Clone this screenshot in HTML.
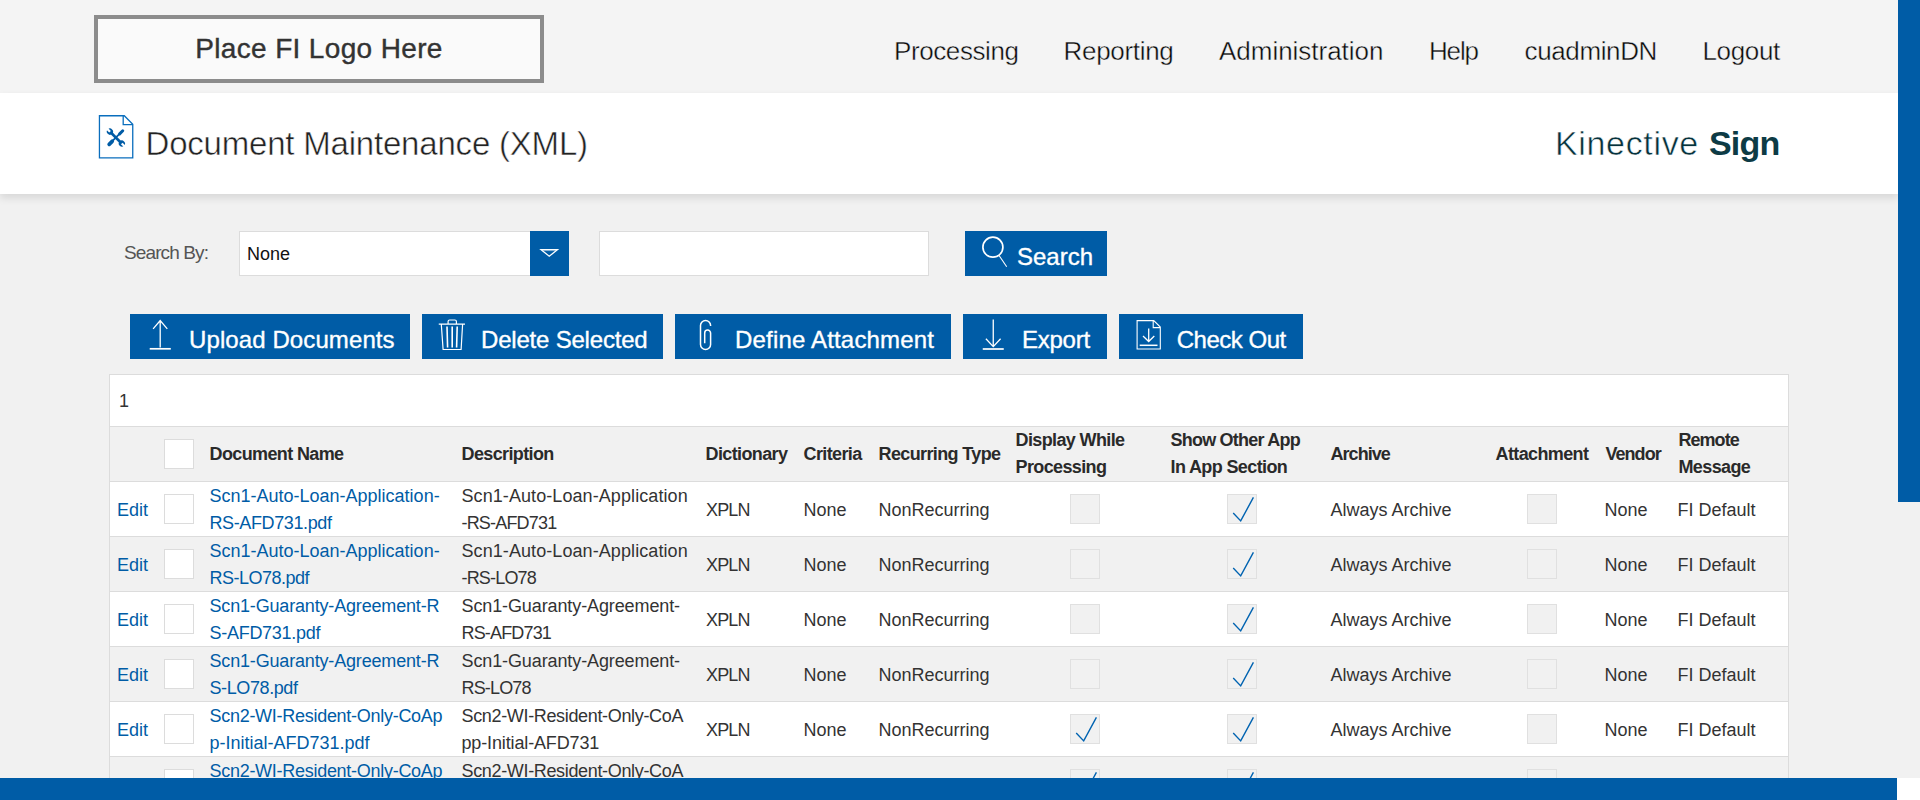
<!DOCTYPE html>
<html lang="en">
<head>
<meta charset="utf-8">
<title>Document Maintenance (XML)</title>
<style>
*{box-sizing:border-box;margin:0;padding:0}
html,body{width:1920px;height:800px;overflow:hidden;background:#f1f1f1}
body{font-family:"Liberation Sans",sans-serif;color:#333;position:relative}
#app{position:absolute;left:0;top:0;width:1898px;height:778px;overflow:hidden;background:#f1f1f1}
/* scrollbars */
#vthumb{position:absolute;left:1898px;top:0;width:22px;height:502px;background:#005ca6}
#hthumb{position:absolute;left:0;top:778px;width:1897px;height:22px;background:#005ca6}
#corner{position:absolute;left:1897px;top:778px;width:23px;height:22px;background:#fff}
/* header */
#top{position:absolute;left:0;top:0;width:1898px;height:93px;background:#f4f4f4}
#logo{position:absolute;left:94px;top:15px;width:450px;height:68px;border:4px solid #8c8c8c;background:#fafafa;text-align:center;font-size:28px;letter-spacing:.35px;line-height:59px;color:#333;-webkit-text-stroke:.4px #333;white-space:nowrap}
#nav{position:absolute;left:0;top:0;list-style:none}
#nav li{position:absolute;top:35px;font-size:26px;line-height:32px;color:#0a0a0a;-webkit-text-stroke:.4px #f4f4f4;white-space:nowrap}
/* title bar */
#bar{position:absolute;left:0;top:93px;width:1898px;height:101px;background:#fff;box-shadow:0 4px 8px rgba(0,0,0,.11)}
#bar h1{position:absolute;left:145.5px;top:31px;letter-spacing:-.2px;font-size:33px;line-height:40px;font-weight:normal;color:#222;-webkit-text-stroke:.5px #fff;white-space:nowrap}
#brand{position:absolute;left:1555px;top:30px;font-size:34px;line-height:40px;color:#0d3b45;white-space:nowrap}
#brand b{font-weight:bold;position:absolute;left:154px;top:0;letter-spacing:-.83px}
#docicon{position:absolute;left:97px;top:21px}
/* search row */
#lbl{position:absolute;left:124px;top:241px;font-size:19px;letter-spacing:-.88px;line-height:24px;color:#555;white-space:nowrap}
#sel{position:absolute;left:239px;top:231px;width:330px;height:45px;background:#fff;border:1px solid #dcdcdc;font-size:18px;line-height:44px;padding-left:7px;color:#111}
#sel i{position:absolute;right:-1px;top:-1px;width:39px;height:45px;background:#005ca6}
#txt{position:absolute;left:599px;top:231px;width:330px;height:45px;background:#fff;border:1px solid #dcdcdc}
.btn{position:absolute;height:45px;background:#005ca6;color:#fff;font-size:24px;line-height:30px;white-space:nowrap}
.btn span{position:absolute;top:11px;-webkit-text-stroke:.35px #fff}
.btn svg{position:absolute;left:0;top:0}
/* grid */
#grid{position:absolute;left:109px;top:374px;width:1679px;border-collapse:collapse;table-layout:fixed;font-size:18px;line-height:27px;color:#333;background:#fff}
#grid td,#grid th{border-top:1px solid #dcdcdc;border-bottom:1px solid #dcdcdc;padding:0 0 0 8px;text-align:left;vertical-align:middle;white-space:nowrap;overflow:visible}
#grid{border:1px solid #dcdcdc}
#grid tr.pg td{height:52px;background:#fff;padding:2px 0 0 9px}
#grid tr.hd th{height:55px;background:#f1f1f1;font-weight:bold;color:#2a2a2a;letter-spacing:-.62px}
#grid tr.r{background:#fff}
#grid tr.r td{height:55px;line-height:26.5px;padding-top:1px}
#grid tr.alt{background:#f1f1f1}
#grid tr.r td.t{padding-top:3px}
#grid tr.r .cb,#grid tr.r .ro{margin-top:-1px}
#grid a{color:#005ca6;text-decoration:none}
.cb{position:relative;display:block;width:30px;height:30px;background:#fff;border:1px solid #dcdcdc}
.ro{display:block;width:30px;height:30px;background:#f1f1f1;border:1px solid #e0e0e0;margin:0 auto;position:relative}
.ro svg{position:absolute;left:0;top:0}
#grid td.c{text-align:center;padding-right:8px}
#grid td:nth-child(9),#grid td:nth-child(11){padding-right:10px}
#grid td:nth-child(12),#grid td:nth-child(13){padding-left:7px}
#grid td:first-child{padding-left:7px}
#grid td:nth-child(2),#grid th:nth-child(2){padding-left:6px}
</style>
</head>
<body>
<div id="app">
  <div id="top">
    <div id="logo">Place FI Logo Here</div>
    <ul id="nav">
      <li style="left:894px;letter-spacing:-.4px">Processing</li>
      <li style="left:1063.5px;letter-spacing:-.3px">Reporting</li>
      <li style="left:1219px;letter-spacing:-.02px">Administration</li>
      <li style="left:1429px;letter-spacing:-1.17px">Help</li>
      <li style="left:1524.5px;letter-spacing:-.37px">cuadminDN</li>
      <li style="left:1702.5px;letter-spacing:-.35px">Logout</li>
    </ul>
  </div>
  <div id="bar">
    <svg id="docicon" width="38" height="46" viewBox="0 0 38 46">
      <path d="M2.45 1.75H27.3L35.75 10.2V43.95H2.45Z M26.2 1.75V10.6H35.75" fill="none" stroke="#0a6ebd" stroke-width="1.3"/>
      <g transform="translate(18.9 23.6) scale(.88) rotate(45)" fill="#005ca6" stroke="none">
        <rect x="-9" y="-1.5" width="18" height="3"/>
        <circle cx="-9.6" cy="0" r="3.5"/><circle cx="9.6" cy="0" r="3.5"/>
        <rect x="-14" y="-1.3" width="4.6" height="2.6" fill="#fff"/><rect x="9.4" y="-1.3" width="4.6" height="2.6" fill="#fff"/>
      </g>
      <g transform="translate(18.9 23.6) scale(.88) rotate(-45)" fill="none" stroke="#005ca6" stroke-linecap="round">
        <path d="M-5 0H5" stroke-width="2"/>
        <path d="M-10.8 0H-6" stroke-width="4.2"/>
        <path d="M6 0H11" stroke-width="3.4"/>
      </g>
    </svg>
    <h1>Document Maintenance (XML)</h1>
    <div id="brand"><span style="letter-spacing:.66px;color:#06323c;-webkit-text-stroke:.55px #fff">Kinective</span> <b>Sign</b></div>
  </div>
  <div id="lbl">Search By:</div>
  <div id="sel">None<i><svg width="39" height="44" viewBox="0 0 39 44"><path d="M10.9 18.5H27.6L19.25 25.3Z" fill="none" stroke="#fff" stroke-width="1.2"/><path d="M12.5 19.6H26" fill="none" stroke="#fff" stroke-opacity=".6" stroke-width="1"/></svg></i></div>
  <div id="txt"></div>
  <div class="btn" id="b0" style="left:965px;top:231px;width:142px"><svg width="142" height="45"><circle cx="27.9" cy="16.2" r="10" fill="none" stroke="#fff" stroke-width="1.7"/><path d="M33.9 24.2L41.7 35.7" fill="none" stroke="#fff" stroke-width="1.1"/></svg><span style="left:52px">Search</span></div>
  <div class="btn" id="b1" style="left:130px;top:314px;width:280px"><svg width="280" height="45"><path d="M30.2 6.6V33.4M23.1 14.9L30.2 6.6L37.3 14.9" fill="none" stroke="#fff" stroke-width="1.3"/><path d="M19.7 34.8H40.8" fill="none" stroke="#fff" stroke-width="1.7"/></svg><span style="left:59px;letter-spacing:.1px">Upload Documents</span></div>
  <div class="btn" id="b2" style="left:422px;top:314px;width:241px"><svg width="241" height="45"><path d="M16.75 10.2H43M26.1 10.2V7.5Q26.1 6 27.6 6H32.9Q34.4 6 34.4 7.5V10.2M19.3 10.2L21.1 35.5H39.1L40.6 10.2" fill="none" stroke="#fff" stroke-width="1.2"/><path d="M25 12.5L25.6 33.5M30.2 12.5V33.5M35.2 12.5L34.6 33.5" fill="none" stroke="#fff" stroke-width="1.6"/></svg><span style="left:59px;letter-spacing:-.2px">Delete Selected</span></div>
  <div class="btn" id="b3" style="left:675px;top:314px;width:276px"><svg width="276" height="45"><path d="M35.6 12.1V11.6A5.05 5.05 0 0 0 25.5 11.6V30.45A5.05 5.05 0 0 0 35.6 30.45V19A2.95 2.95 0 0 0 29.7 19V29.3" fill="none" stroke="#fff" stroke-width="1.5"/></svg><span style="left:60px;letter-spacing:.18px">Define Attachment</span></div>
  <div class="btn" id="b4" style="left:963px;top:314px;width:144px"><svg width="144" height="45"><path d="M30.25 5.6V32.4M22.9 24.75L30.25 32.6L37.6 24.75" fill="none" stroke="#fff" stroke-width="1.3"/><path d="M19.75 35H40.75" fill="none" stroke="#fff" stroke-width="1.7"/></svg><span style="left:59px;letter-spacing:-.25px">Export</span></div>
  <div class="btn" id="b5" style="left:1119px;top:314px;width:184px"><svg width="184" height="45"><path d="M18.1 6.6H34.75L41.3 13.1V35H18.1ZM34.2 6.6V13.6H41.3" fill="none" stroke="#fff" stroke-width="1.1"/><path d="M29.7 14.4V27.3M24 22L29.7 27.5L35.3 22" fill="none" stroke="#fff" stroke-width="1.3"/><path d="M20.7 31.3H38.5" fill="none" stroke="#fff" stroke-width="1.5"/></svg><span style="left:57.7px;letter-spacing:-.48px">Check Out</span></div>
  <table id="grid">
    <colgroup>
      <col style="width:48px"><col style="width:44px"><col style="width:252px"><col style="width:244px"><col style="width:98px"><col style="width:75px"><col style="width:137px"><col style="width:155px"><col style="width:160px"><col style="width:165px"><col style="width:110px"><col style="width:73px"><col style="width:118px">
    </colgroup>
    <tr class="pg"><td colspan="13">1</td></tr>
    <tr class="hd"><th></th><th><span class="cb"></span></th><th>Document Name</th><th>Description</th><th>Dictionary</th><th>Criteria</th><th>Recurring Type</th><th>Display While<br>Processing</th><th><span style="letter-spacing:-.78px">Show Other App</span><br>In App Section</th><th style="letter-spacing:-.95px">Archive</th><th>Attachment</th><th style="letter-spacing:-.97px">Vendor</th><th><span style="letter-spacing:-.97px">Remote</span><br>Message</th></tr>
    <tr class="r"><td class="t"><a>Edit</a></td><td><span class="cb"></span></td><td><a>Scn1-Auto-Loan-Application-<br><span style="letter-spacing:-.38px">RS-AFD731.pdf</span></a></td><td><span style="letter-spacing:.08px">Scn1-Auto-Loan-Application</span><br><span style="letter-spacing:-.82px">-RS-AFD731</span></td><td class="t" style="letter-spacing:-.85px;padding-left:8.5px">XPLN</td><td class="t">None</td><td class="t">NonRecurring</td><td class="c"><span class="ro"></span></td><td class="c"><span class="ro"><svg width="28" height="28" viewBox="0 0 28 28"><path d="M5.2 18L12.7 25.9L25.4 2.4" fill="none" stroke="#0063b1" stroke-width="1.4"/></svg></span></td><td class="t">Always Archive</td><td class="c"><span class="ro"></span></td><td class="t">None</td><td class="t">FI Default</td></tr>
    <tr class="r alt"><td class="t"><a>Edit</a></td><td><span class="cb"></span></td><td><a>Scn1-Auto-Loan-Application-<br><span style="letter-spacing:-.50px">RS-LO78.pdf</span></a></td><td><span style="letter-spacing:.08px">Scn1-Auto-Loan-Application</span><br><span style="letter-spacing:-.82px">-RS-LO78</span></td><td class="t" style="letter-spacing:-.85px;padding-left:8.5px">XPLN</td><td class="t">None</td><td class="t">NonRecurring</td><td class="c"><span class="ro"></span></td><td class="c"><span class="ro"><svg width="28" height="28" viewBox="0 0 28 28"><path d="M5.2 18L12.7 25.9L25.4 2.4" fill="none" stroke="#0063b1" stroke-width="1.4"/></svg></span></td><td class="t">Always Archive</td><td class="c"><span class="ro"></span></td><td class="t">None</td><td class="t">FI Default</td></tr>
    <tr class="r"><td class="t"><a>Edit</a></td><td><span class="cb"></span></td><td><a><span style="letter-spacing:-.17px">Scn1-Guaranty-Agreement-R</span><br><span style="letter-spacing:-.28px">S-AFD731.pdf</span></a></td><td><span style="letter-spacing:-.11px">Scn1-Guaranty-Agreement-</span><br><span style="letter-spacing:-.84px">RS-AFD731</span></td><td class="t" style="letter-spacing:-.85px;padding-left:8.5px">XPLN</td><td class="t">None</td><td class="t">NonRecurring</td><td class="c"><span class="ro"></span></td><td class="c"><span class="ro"><svg width="28" height="28" viewBox="0 0 28 28"><path d="M5.2 18L12.7 25.9L25.4 2.4" fill="none" stroke="#0063b1" stroke-width="1.4"/></svg></span></td><td class="t">Always Archive</td><td class="c"><span class="ro"></span></td><td class="t">None</td><td class="t">FI Default</td></tr>
    <tr class="r alt"><td class="t"><a>Edit</a></td><td><span class="cb"></span></td><td><a><span style="letter-spacing:-.17px">Scn1-Guaranty-Agreement-R</span><br><span style="letter-spacing:-.40px">S-LO78.pdf</span></a></td><td><span style="letter-spacing:-.11px">Scn1-Guaranty-Agreement-</span><br><span style="letter-spacing:-.83px">RS-LO78</span></td><td class="t" style="letter-spacing:-.85px;padding-left:8.5px">XPLN</td><td class="t">None</td><td class="t">NonRecurring</td><td class="c"><span class="ro"></span></td><td class="c"><span class="ro"><svg width="28" height="28" viewBox="0 0 28 28"><path d="M5.2 18L12.7 25.9L25.4 2.4" fill="none" stroke="#0063b1" stroke-width="1.4"/></svg></span></td><td class="t">Always Archive</td><td class="c"><span class="ro"></span></td><td class="t">None</td><td class="t">FI Default</td></tr>
    <tr class="r"><td class="t"><a>Edit</a></td><td><span class="cb"></span></td><td><a><span style="letter-spacing:-.28px">Scn2-WI-Resident-Only-CoAp</span><br>p-Initial-AFD731.pdf</a></td><td><span style="letter-spacing:-.34px">Scn2-WI-Resident-Only-CoA</span><br><span style="letter-spacing:-.14px">pp-Initial-AFD731</span></td><td class="t" style="letter-spacing:-.85px;padding-left:8.5px">XPLN</td><td class="t">None</td><td class="t">NonRecurring</td><td class="c"><span class="ro"><svg width="28" height="28" viewBox="0 0 28 28"><path d="M5.2 18L12.7 25.9L25.4 2.4" fill="none" stroke="#0063b1" stroke-width="1.4"/></svg></span></td><td class="c"><span class="ro"><svg width="28" height="28" viewBox="0 0 28 28"><path d="M5.2 18L12.7 25.9L25.4 2.4" fill="none" stroke="#0063b1" stroke-width="1.4"/></svg></span></td><td class="t">Always Archive</td><td class="c"><span class="ro"></span></td><td class="t">None</td><td class="t">FI Default</td></tr>
    <tr class="r alt"><td class="t"><a>Edit</a></td><td><span class="cb"></span></td><td><a><span style="letter-spacing:-.28px">Scn2-WI-Resident-Only-CoAp</span><br>p-Initial-LO78.pdf</a></td><td><span style="letter-spacing:-.34px">Scn2-WI-Resident-Only-CoA</span><br><span style="letter-spacing:-.14px">pp-Initial-LO78</span></td><td class="t" style="letter-spacing:-.85px;padding-left:8.5px">XPLN</td><td class="t">None</td><td class="t">NonRecurring</td><td class="c"><span class="ro"><svg width="28" height="28" viewBox="0 0 28 28"><path d="M5.2 18L12.7 25.9L25.4 2.4" fill="none" stroke="#0063b1" stroke-width="1.4"/></svg></span></td><td class="c"><span class="ro"><svg width="28" height="28" viewBox="0 0 28 28"><path d="M5.2 18L12.7 25.9L25.4 2.4" fill="none" stroke="#0063b1" stroke-width="1.4"/></svg></span></td><td class="t">Always Archive</td><td class="c"><span class="ro"></span></td><td class="t">None</td><td class="t">FI Default</td></tr>
  </table>
</div>
<div id="vthumb"></div>
<div id="hthumb"></div>
<div id="corner"></div>
</body>
</html>
